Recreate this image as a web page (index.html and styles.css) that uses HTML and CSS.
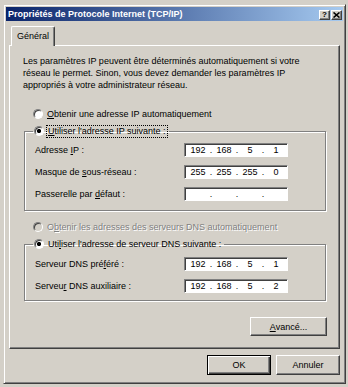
FILE: index.html
```html
<!DOCTYPE HTML>
<html>
<head>
    <meta charset="UTF-8">
    <title>Propriétés de Protocole Internet (TCP/IP)</title>
    <link rel="stylesheet" href="styles.css">
</head>
<body>
<div id="wrap">
    <div class="window">

        <div class="titlebar">
            <span class="title">Propriétés de Protocole Internet (TCP/IP)</span>
            <div class="tbtns">
                <span class="tbtn help">?</span>
                <span class="tbtn close">
                    <svg width="7" height="6" viewBox="0 0 7 6"><path d="M0.5 0.5 L6.5 5.5 M6.5 0.5 L0.5 5.5" stroke="#000" stroke-width="1.6" fill="none"/></svg>
                </span>
            </div>
        </div>

        <div class="tabs">
            <div class="tab">Général</div>
        </div>

        <div class="panel">
            <p class="intro">Les paramètres IP peuvent être déterminés automatiquement si votre réseau le permet. Sinon, vous devez demander les paramètres IP appropriés à votre administrateur réseau.</p>

            <div class="opt first"><span class="radio"></span><span><u>O</u>btenir une adresse IP automatiquement</span></div>

            <fieldset class="group g1">
                <legend><span class="radio on"></span><span class="focus"><u>U</u>tiliser l'adresse IP suivante :</span></legend>
                <div class="row">
                    <span class="lbl">Adresse <u>I</u>P :</span>
                    <div class="ip"><span>192</span><i>.</i><span>168</span><i>.</i><span>5</span><i>.</i><span>1</span></div>
                </div>
                <div class="row">
                    <span class="lbl">Masque de <u>s</u>ous-réseau :</span>
                    <div class="ip"><span>255</span><i>.</i><span>255</span><i>.</i><span>255</span><i>.</i><span>0</span></div>
                </div>
                <div class="row">
                    <span class="lbl">Passerelle par <u>d</u>éfaut :</span>
                    <div class="ip"><span></span><i>.</i><span></span><i>.</i><span></span><i>.</i><span></span></div>
                </div>
            </fieldset>

            <div class="opt dis"><span class="radio off"></span><span>O<u>b</u>tenir les adresses des serveurs DNS automatiquement</span></div>

            <fieldset class="group g2">
                <legend><span class="radio on"></span><span class="nofocus">Uti<u>l</u>iser l'adresse de serveur DNS suivante :</span></legend>
                <div class="row">
                    <span class="lbl">Serveur DNS pré<u>f</u>éré :</span>
                    <div class="ip"><span>192</span><i>.</i><span>168</span><i>.</i><span>5</span><i>.</i><span>1</span></div>
                </div>
                <div class="row">
                    <span class="lbl">Serveu<u>r</u> DNS auxiliaire :</span>
                    <div class="ip"><span>192</span><i>.</i><span>168</span><i>.</i><span>5</span><i>.</i><span>2</span></div>
                </div>
            </fieldset>

            <div class="adv">
                <span class="btn wide"><u>A</u>vancé...</span>
            </div>
        </div>

        <div class="actions">
            <span class="btn default">OK</span>
            <span class="btn">Annuler</span>
        </div>

    </div>
</div>
</body>
</html>
```

FILE: styles.css
```css
body{margin:0;background:#d4d0c8;font-family:"Liberation Sans",Arial,sans-serif;font-size:9px;color:#000;}
p{margin:0;}
u{text-decoration:underline;text-underline-offset:1px;}

#wrap{
    padding: 4px 2px 0 3px;
}
.window{
    box-sizing: border-box;
    width: 343px;
    height: 380px;
    padding: 2px;
    border: 1px solid;
    border-color: #d4d0c8 #404040 #404040 #d4d0c8;
    box-shadow: inset 1px 1px #fff, inset -1px -1px #808080;
}

/* title bar */
.titlebar{
    display: flex;
    align-items: center;
    justify-content: space-between;
    height: 14px;
    padding: 0 1px 0 2px;
    background: linear-gradient(to right, #0a246a, #a6caf0);
}
.titlebar .title{
    color: #fff;
    font-weight: bold;
    font-size: 9px;
}
.tbtns{
    display: flex;
    gap: 1px;
    margin-top: 1px;
}
.tbtn{
    box-sizing: border-box;
    display: flex;
    align-items: center;
    justify-content: center;
    width: 11px;
    height: 10px;
    background: #d4d0c8;
    border: 1px solid;
    border-color: #fff #404040 #404040 #fff;
    box-shadow: inset -1px -1px #808080;
    font-weight: bold;
    font-size: 8px;
    line-height: 1;
}

/* tabs */
.tabs{
    display: flex;
    margin: 5px 0 0 5px;
    height: 19px;
    position: relative;
    z-index: 1;
}
.tab{
    box-sizing: border-box;
    width: 44px;
    height: 20px;
    padding-top: 4px;
    text-align: center;
    background: #d4d0c8;
    border: 1px solid;
    border-bottom: none;
    border-color: #fff #404040 #fff #fff;
    border-radius: 2px 2px 0 0;
    box-shadow: inset -1px 0 #808080;
}

/* panel */
.panel{
    box-sizing: border-box;
    width: 331px;
    height: 304px;
    margin-left: 3px;
    padding: 9px 12px 0 13px;
    border: 1px solid;
    border-color: #fff #404040 #404040 #fff;
    box-shadow: inset -1px -1px #808080;
}
.intro{
    line-height: 12px;
    width: 300px;
}
.radio{
    box-sizing: border-box;
    display: inline-block;
    width: 10px;
    height: 10px;
    border-radius: 50%;
    border: 1px solid;
    border-color: #808080 #fff #fff #808080;
    box-shadow: inset 1px 1px #404040;
    background: #fff;
    flex: none;
}
.radio.on{
    background: radial-gradient(circle, #000 0 1.8px, #fff 2.4px);
}
.radio.off{
    background: #d4d0c8;
}
.opt{
    display: flex;
    align-items: center;
    gap: 4px;
    height: 13px;
    margin-left: 10px;
}
.opt.first{
    margin-top: 16px;
}
.opt.dis{
    margin-top: 9px;
    color: #808080;
    text-shadow: 1px 1px #fff;
}

/* group boxes */
.group{
    box-sizing: border-box;
    width: 302px;
    margin: 4px 0 0 1px;
    padding: 5px 0 9px 8px;
    border: 1px solid #808080;
    box-shadow: 1px 1px #fff, inset 1px 1px #fff;
    min-width: 0;
}
.group legend{
    display: flex;
    align-items: center;
    gap: 3px;
    height: 14px;
    padding: 0 2px 0 1px;
}
.group legend .focus{
    outline: 1px dotted #000;
    padding: 0 1px;
    line-height: 11px;
}
.group legend .nofocus{
    padding: 0 1px;
}
.g2{
    padding-top: 6px;
    padding-bottom: 7px;
}
.row{
    display: flex;
    align-items: center;
    height: 14px;
    margin-bottom: 8px;
}
.row:last-child{
    margin-bottom: 0;
}
.lbl{
    width: 149px;
    padding-left: 2px;
}
.ip{
    box-sizing: border-box;
    display: flex;
    align-items: center;
    width: 104px;
    height: 14px;
    padding-left: 2px;
    background: #fff;
    border: 1px solid;
    border-color: #808080 #fff #fff #808080;
    box-shadow: inset 1px 1px #404040;
}
.ip span{
    width: 22px;
    text-align: center;
}
.ip i{
    font-style: normal;
    width: 4px;
    text-align: center;
}

/* buttons */
.btn{
    box-sizing: border-box;
    display: flex;
    align-items: center;
    justify-content: center;
    width: 64px;
    height: 20px;
    background: #d4d0c8;
    border: 1px solid;
    border-color: #fff #404040 #404040 #fff;
    box-shadow: inset -1px -1px #808080;
}
.btn.wide{
    width: 77px;
    height: 19px;
}
.btn.default{
    border: 1px solid #000;
    box-shadow: inset 1px 1px #fff, inset -1px -1px #404040, inset -2px -2px #808080;
}
.adv{
    display: flex;
    justify-content: flex-end;
    margin-top: 16px;
}
.actions{
    display: flex;
    justify-content: flex-end;
    gap: 5px;
    margin-top: 6px;
    padding-right: 3px;
}
```
